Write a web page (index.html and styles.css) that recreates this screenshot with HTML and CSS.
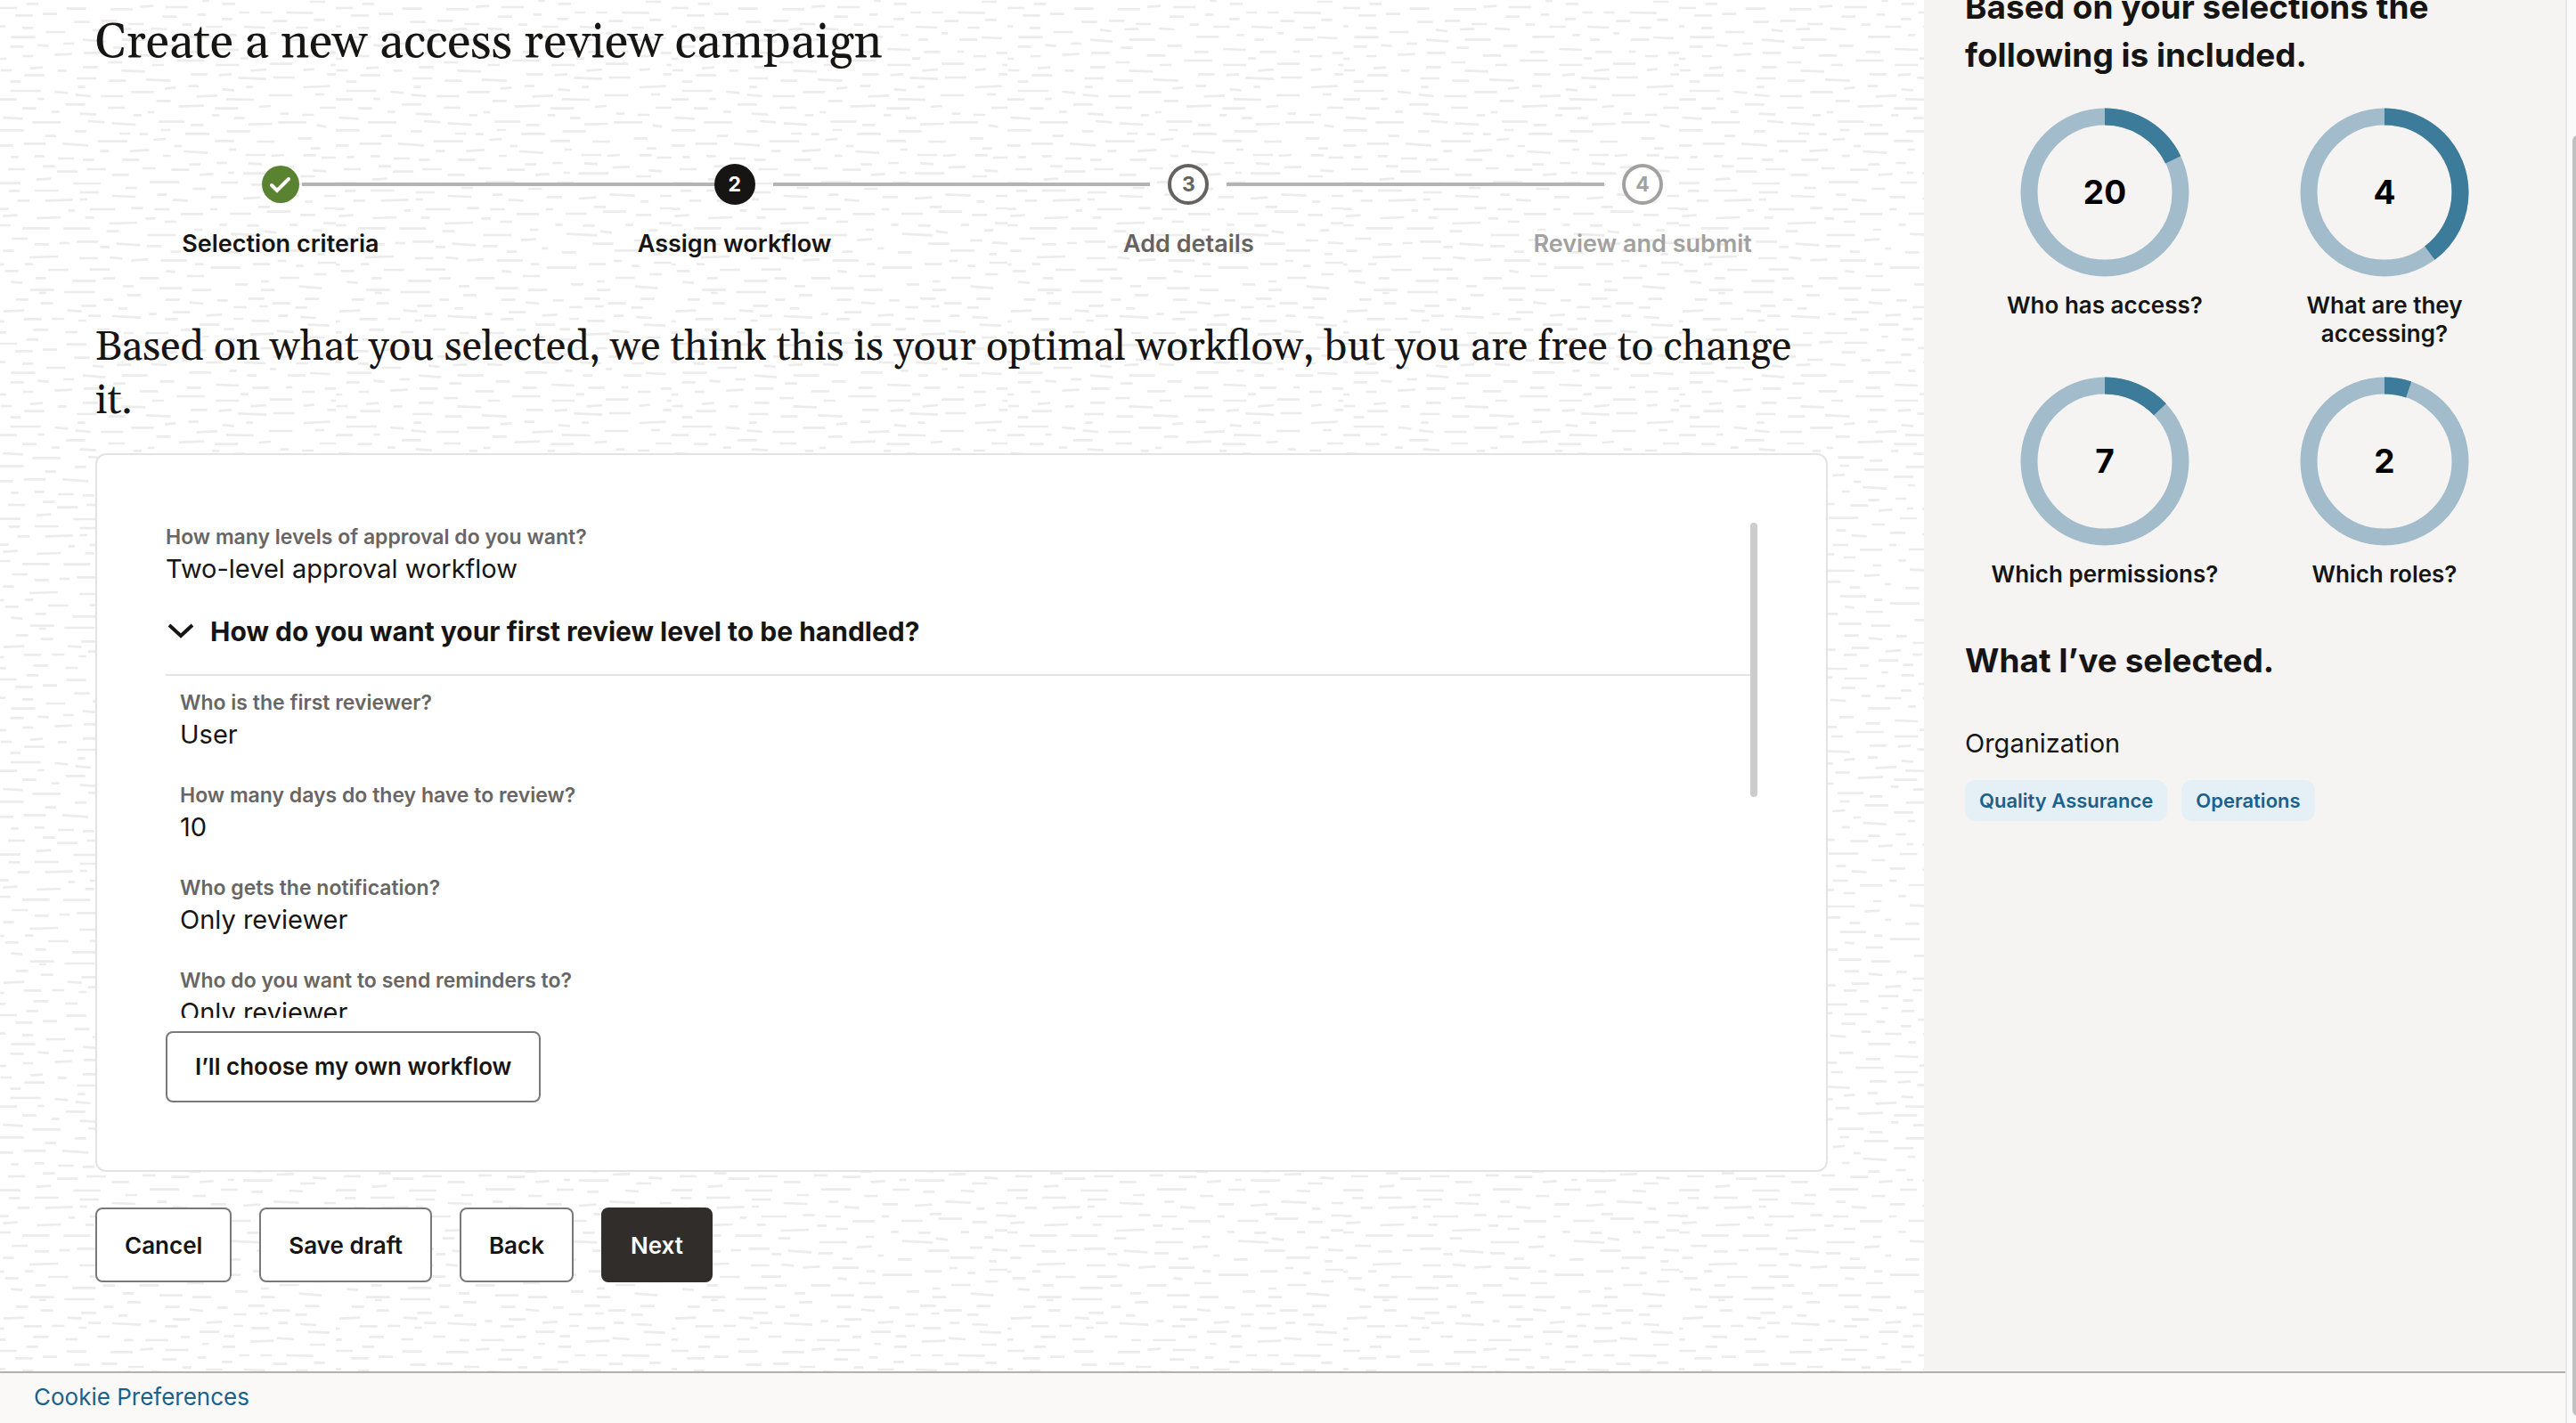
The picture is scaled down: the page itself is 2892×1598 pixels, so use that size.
FILE: index.html
```html
<!DOCTYPE html>
<html lang="en">
<head>
<meta charset="utf-8">
<title>Create a new access review campaign</title>
<link rel="stylesheet" href="styles.css">
</head>
<body>
<div class="shell">
  <div class="page">
    <div class="columns">
      <main class="main">
        <svg class="texture" aria-hidden="true">
          <defs>
            <pattern id="weave" width="377" height="377" patternUnits="userSpaceOnUse" viewBox="8 0 1131 1131">
              <path d="M97 13h40M757 13h43M1052 6h51M690 3h22M8 27h57M232 29h66M380 31h75M480 23l45-3M565 24h77M152 47h48M60 52h58M555 56h47M673 49h29M813 42h35M885 42h37M972 42l91 2M755 64h35M1065 67h37M927 71h48M258 74h52M350 70h52M440 81h52M622 83h31M8 89h18M83 94h37M163 108h65M320 101l38 4M402 99l48-2M518 96l52 3M702 90h55M830 90l72 3M1005 93h40M918 112h20M780 118h25M645 124h75M1052 126l68 3M45 125h82M135 152l37 3M222 147h35M287 134l76 6M418 134h87M390 161h40M547 154h48M840 134h32M977 134h61M43 157h45M735 165l77 3M290 178h62M192 185l58-3M85 189h35M478 187h62M637 175h48M858 175h55M970 174h23M1025 189h43M1102 178h37M8 198h22M372 210h48M603 204h94M520 219h40M735 219h78M818 197h27M917 215h76M1122 219h17M10 237h38M110 230l42-3M202 238h30M287 226h50M417 238l80 3M650 250h56M745 253l43-3M852 238l53-4M1030 236l36-3M1110 250h29M90 254h68M267 264h66M43 275h35M375 272h57M500 268l83 4M810 262l95 4M928 261h72M270 293h25M563 298l37-3M643 290h34M757 301l40 3M837 293h23M1030 294l90-4M43 306h102M192 309l45 4M262 319l51 5M348 324h75M450 310h76M670 325l70-3M913 321h80M1070 318h30M8 335h57M135 333h22M535 340h48M770 334l93 2M230 352h65M83 365h47M372 363h56M610 359l85-3M732 365h78M880 360l40-3M1085 363h54M182 377h26M277 383l55 3M505 378h23M457 388h28M722 388h25M952 383h28M1025 387h40M18 396l67 4M797 398h35M117 412h95M305 408l55 4M385 415l80 5M543 410h87M650 421h43M845 419l80-2M945 412h95M1075 422l32 5M8 439h80M260 442h38M410 450h37M478 452h27M550 438h32M632 451h81M772 442h78M160 458h37M525 471l42-3M337 476h100M732 475h65M873 477h59M1012 466h46M8 490h44M88 484h74M218 484l87 6M595 492h25M778 504h25M1055 500h32M345 509h30M447 509l63-4M627 510l80 5M835 522h67M922 525l43-3M1030 523h42M1090 531h49M45 529h25M125 526h32M203 534h54M287 538h38M420 538h57M557 525h26M738 549h34M845 550l45 3M645 554h38M152 560h41M940 564l58-2"/>
              <path transform="translate(0 553)" d="M35 17h57M200 25h70M300 17h65M487 14h45M585 19h60M385 36h57M680 36l47-3M775 29h22M827 31h100M1062 21l45 3M1020 41h50M130 52l50-3M8 64h69M255 65h92M512 61h100M752 62h58M855 69h38M982 65l46 3M430 80h40M657 83h45M38 90h37M125 89h80M277 95h65M385 107l80 3M537 103h33M718 111h52M827 116l58-4M930 102l85 4M1100 107h39M67 123h40M160 123l93-3M277 119h25M590 120l50 3M1035 126h27M8 151h29M238 156h22M310 152h85M450 148h40M527 152h51M715 152h25M877 144h40M907 160h80M1100 149h39M617 168h75M782 167h71M1020 171h50M18 175l49-3M132 182l81-3M295 180h30M498 183h32M562 194h40M375 200l95-3M8 206h35M747 204h25M840 207h40M983 205h27M1097 199h42M83 216h92M222 217h90M367 226h41M662 221h28M785 235l103 5M898 226l40 5M1062 223h30M505 239h95M48 251h54M632 256l51-3M267 261h71M125 270h47M208 266h34M400 268l80 5M345 279h32M503 276h49M873 268h70M1013 257h42M1088 264l51 3M18 292h37M583 295h35M702 284h21M770 297h47M947 291h80M1077 303h26M107 314l96-3M275 317h62M378 314l42 4M450 324l57-3M550 325h88M943 326h29M1078 332h61M92 337h28M8 338h14M665 337h28M718 349h100M860 337h58M1005 343h25M25 360h45M170 356h68M310 355h67M567 360l31 3M1065 371h42M127 384h36M355 385h40M478 384h65M638 377h57M950 383h65M252 393h78M45 397l38 3M887 395h26M800 405h42M422 411h36M545 418h77M110 424h80M225 431h102M655 424h65M887 424h46M1015 412l77 6M140 434h23M437 441h45M62 456h41M145 469h42M357 457h33M565 457h48M647 466l46 4M740 459h35M845 453h53M925 469h60M1035 454h47M282 477h50M407 486h31M795 482h43M882 479h28M1003 483h39M20 496l70-3M235 493l48 3M590 499h58M510 505h25M305 511h42M385 512l97 5M703 510l52-3M945 511h33M1020 515l53 3M88 522h60M183 521h42M273 527h25M563 522h44M795 521h32M855 528h60M8 530h14M680 541h67M1045 541l73 3M120 558h50M335 557h43M617 558h30M762 556h35M228 566h42M425 569h32M498 569h77M8 567h20M850 574l80-3M940 562l58 4"/>
            </pattern>
          </defs>
          <rect width="100%" height="100%" fill="url(#weave)"/>
        </svg>

        <h1 class="title">Create a new access review campaign</h1>

        <ol class="steps">
          <li class="step step-done">
            <div class="step-rail">
              <span class="step-dot"><svg viewBox="0 0 42 42" role="img" aria-label="Completed"><path d="M11 22l6 6 13-13"/></svg></span>
              <span class="step-line"></span>
            </div>
            <span class="step-label">Selection criteria</span>
          </li>
          <li class="step step-current" aria-current="step">
            <div class="step-rail"><span class="step-dot">2</span><span class="step-line"></span></div>
            <span class="step-label">Assign workflow</span>
          </li>
          <li class="step step-next">
            <div class="step-rail"><span class="step-dot">3</span><span class="step-line"></span></div>
            <span class="step-label">Add details</span>
          </li>
          <li class="step step-disabled">
            <div class="step-rail"><span class="step-dot">4</span></div>
            <span class="step-label">Review and submit</span>
          </li>
        </ol>

        <h2 class="lead">Based on what you selected, we think this is your optimal workflow, but you are free to change it.</h2>

        <section class="card">
          <div class="scroller">
            <div class="scroller-content">
              <dl class="fields">
                <div><dt>How many levels of approval do you want?</dt><dd>Two-level approval workflow</dd></div>
              </dl>
              <button type="button" class="disclosure" aria-expanded="true">
                <svg viewBox="0 0 34 34" aria-hidden="true"><path d="M4 10l13 12 13-12"/></svg>
                <span>How do you want your first review level to be handled?</span>
              </button>
              <dl class="fields fields-nested">
                <div><dt>Who is the first reviewer?</dt><dd>User</dd></div>
                <div><dt>How many days do they have to review?</dt><dd>10</dd></div>
                <div><dt>Who gets the notification?</dt><dd>Only reviewer</dd></div>
                <div><dt>Who do you want to send reminders to?</dt><dd>Only reviewer</dd></div>
              </dl>
            </div>
            <div class="scroller-thumb"></div>
          </div>
          <button type="button" class="btn btn-card">I’ll choose my own workflow</button>
        </section>

        <div class="actions">
          <button type="button" class="btn">Cancel</button>
          <button type="button" class="btn">Save draft</button>
          <button type="button" class="btn">Back</button>
          <button type="button" class="btn btn-primary">Next</button>
        </div>
      </main>

      <aside class="summary">
        <h2 class="summary-title">Based on your selections the following is included.</h2>
        <div class="charts">
          <figure class="chart">
            <div class="ring">
              <svg viewBox="0 0 190 190" aria-hidden="true"><circle class="ring-track" cx="95" cy="95" r="85"/><circle class="ring-value" cx="95" cy="95" r="85" pathLength="1000" stroke-dasharray="179 1000"/></svg>
              <span>20</span>
            </div>
            <figcaption>Who has access?</figcaption>
          </figure>
          <figure class="chart">
            <div class="ring">
              <svg viewBox="0 0 190 190" aria-hidden="true"><circle class="ring-track" cx="95" cy="95" r="85"/><circle class="ring-value" cx="95" cy="95" r="85" pathLength="1000" stroke-dasharray="398 1000"/></svg>
              <span>4</span>
            </div>
            <figcaption>What are they accessing?</figcaption>
          </figure>
          <figure class="chart">
            <div class="ring">
              <svg viewBox="0 0 190 190" aria-hidden="true"><circle class="ring-track" cx="95" cy="95" r="85"/><circle class="ring-value" cx="95" cy="95" r="85" pathLength="1000" stroke-dasharray="130 1000"/></svg>
              <span>7</span>
            </div>
            <figcaption>Which permissions?</figcaption>
          </figure>
          <figure class="chart">
            <div class="ring">
              <svg viewBox="0 0 190 190" aria-hidden="true"><circle class="ring-track" cx="95" cy="95" r="85"/><circle class="ring-value" cx="95" cy="95" r="85" pathLength="1000" stroke-dasharray="52 1000"/></svg>
              <span>2</span>
            </div>
            <figcaption>Which roles?</figcaption>
          </figure>
        </div>
        <h2 class="summary-title summary-selected">What I’ve selected.</h2>
        <h3 class="summary-group">Organization</h3>
        <ul class="chips">
          <li>Quality Assurance</li>
          <li>Operations</li>
        </ul>
      </aside>
    </div>
    <footer class="footer"><a href="#cookies">Cookie Preferences</a></footer>
  </div>
  <div class="page-scrollbar"><div class="page-thumb"></div></div>
</div>
</body>
</html>
```
FILE: styles.css
```css
* {
  box-sizing: border-box;
}

body,
h1,
h2,
h3,
dl,
dd,
ol,
ul,
figure {
  margin: 0;
  padding: 0;
}

body {
  background: #fff;
  color: #161513;
  font-family: Inter, "Noto Sans", sans-serif;
  font-size: 29px;
  line-height: 36px;
}

ol,
ul {
  list-style: none;
}

button {
  font: inherit;
  color: inherit;
}

.shell {
  display: flex;
  min-height: 100vh;
}

.page {
  flex: 1;
  display: flex;
  flex-direction: column;
}

.page-scrollbar {
  flex: none;
  width: 12px;
  padding: 152px 0 8px 6px;
  display: flex;
  border-left: 2px solid #e8e8e8;
  background: #fafafa;
  overflow: hidden;
}

.page-thumb {
  flex: none;
  width: 12px;
  border-radius: 8px;
  background: #c1c1c1;
}

.columns {
  flex: 1;
  display: grid;
  grid-template-columns: 3fr 1fr;
}

.main {
  position: relative;
  padding: 16px 61px 96px 60px;
  background: #fff;
}

.main > * {
  position: relative;
}

.main > .texture {
  position: absolute;
  inset: 0;
  width: 100%;
  height: 100%;
}

.texture path {
  fill: none;
  stroke: #ececec;
  stroke-width: 8;
}

.title,
.lead {
  margin: 0 47px;
  font-family: Georgia, Gelasio, "Liberation Serif", serif;
  font-weight: 400;
}

.title {
  font-size: 54px;
  line-height: 64px;
}

/* Progress steps */

.steps {
  display: grid;
  grid-template-columns: repeat(4, 1fr);
  margin-top: 104px;
}

.step {
  display: flex;
  flex-direction: column;
  gap: 26px;
  text-align: center;
}

.step-rail {
  position: relative;
  display: flex;
  align-items: center;
  justify-content: center;
  height: 46px;
}

.step-dot {
  display: grid;
  place-items: center;
  width: 46px;
  height: 46px;
  border: 4px solid currentColor;
  border-radius: 50%;
  font-size: 23px;
  font-weight: 700;
  background: #fff;
}

.step-line {
  position: absolute;
  left: calc(50% + 43px);
  width: calc(100% - 86px);
  height: 4px;
  background: #b4b4b4;
}

.step-label {
  font-size: 27px;
  font-weight: 600;
  line-height: 36px;
}

.step-done .step-dot {
  width: 42px;
  height: 42px;
  border: 0;
  background: #5a8331;
}

.step-done .step-line {
  left: calc(50% + 24px);
  width: calc(100% - 46px);
}

.step-dot svg {
  width: 42px;
  height: 42px;
  fill: none;
  stroke: #fff;
  stroke-width: 4;
  stroke-linecap: round;
}

.step-current .step-dot {
  border-color: #161513;
  background: #161513;
  color: #fff;
}

.step-next {
  color: #65625f;
}

.step-disabled {
  color: #a2a1a0;
}

.lead {
  margin-top: 69px;
  font-size: 46px;
  line-height: 60px;
}

/* Workflow card */

.card {
  margin: 28px 47px 0;
  padding: 76px 77px;
  border: 2px solid #e4e3e2;
  border-radius: 12px;
  background: #fff;
}

.scroller {
  display: flex;
  height: 556px;
  overflow: hidden;
}

.scroller-content {
  flex: 1;
}

.scroller-thumb {
  width: 8px;
  height: 308px;
  border-radius: 4px;
  background: #ccc;
}

.fields {
  display: grid;
  gap: 32px;
}

.fields dt {
  font-size: 23px;
  font-weight: 600;
  line-height: 32px;
  color: #686664;
}

.fields dd {
  line-height: 40px;
}

.fields-nested {
  padding: 14px 16px;
}

.disclosure {
  display: flex;
  align-items: center;
  gap: 16px;
  width: 100%;
  height: 100px;
  padding: 2px 0 0;
  border: 0;
  border-bottom: 2px solid #e4e3e2;
  background: none;
  font-size: 30px;
  font-weight: 700;
}

.disclosure svg {
  width: 34px;
  height: 34px;
  fill: none;
  stroke: #161513;
  stroke-width: 4;
}

.btn {
  padding: 23px 31px 21px;
  border: 2px solid #7b7977;
  border-radius: 8px;
  background: #fff;
  font-size: 26px;
  font-weight: 600;
}

.btn-card {
  margin-top: 15px;
  padding: 20px 31px;
}

.btn-primary {
  border-color: #312d2a;
  background: #312d2a;
  color: #fff;
}

.actions {
  display: flex;
  gap: 31px;
  margin: 40px 47px 0;
}

/* Summary panel */

.summary {
  padding: 0 46px;
  background: #f5f4f2;
}

.summary-title {
  margin-top: -19px;
  font-size: 37px;
  font-weight: 700;
  line-height: 54px;
}

.summary-selected {
  margin-top: 54px;
}

.charts {
  display: grid;
  grid-template-columns: 1fr 1fr;
  gap: 32px 0;
  margin-top: 32px;
}

.chart {
  display: flex;
  flex-direction: column;
  align-items: center;
  gap: 16px;
}

.chart figcaption {
  max-width: 260px;
  font-size: 26px;
  font-weight: 600;
  line-height: 32px;
  text-align: center;
}

.ring {
  display: grid;
  place-items: center;
  font-size: 37px;
  font-weight: 700;
  color: #000;
}

.ring > * {
  grid-area: 1 / 1;
}

.ring svg {
  width: 190px;
  height: 190px;
  transform: rotate(-90deg);
}

.ring circle {
  fill: none;
  stroke-width: 19;
}

.ring .ring-track {
  stroke: #a3bccb;
}

.ring .ring-value {
  stroke: #3d7b9b;
}

.summary-group {
  margin-top: 48px;
  font-size: 29px;
  font-weight: 400;
}

.chips {
  display: flex;
  gap: 16px;
  margin-top: 23px;
}

.chips li {
  padding: 5px 16px;
  border-radius: 12px;
  background: #e4f0f6;
  color: #1a618b;
  font-size: 22px;
  font-weight: 600;
}

.footer {
  padding: 9px 38px 11px;
  border-top: 2px solid #b3afaa;
  background: #fbf9f8;
  font-size: 26px;
}

.footer a {
  color: #1a618b;
  text-decoration: none;
}
```
